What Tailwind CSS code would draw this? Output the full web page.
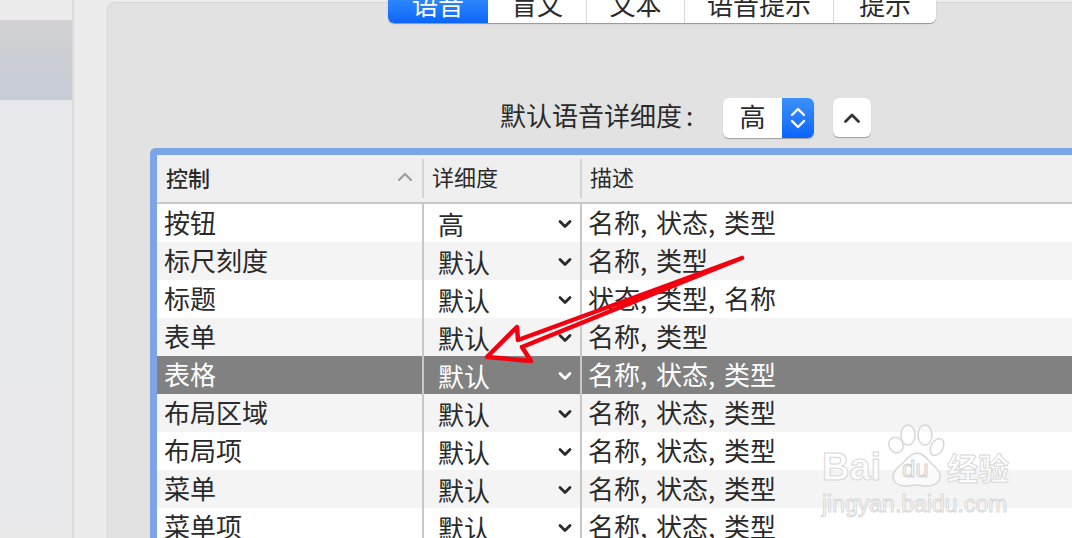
<!DOCTYPE html>
<html lang="zh-CN">

<head>
    <meta charset="UTF-8">
    <title>VoiceOver 详细度</title>
    <script src="https://cdn.jsdelivr.net/npm/@tailwindcss/browser@4"></script>
</head>

<body class="relative h-[538px] w-[1072px] overflow-hidden bg-[#ececec] font-['Noto_Sans_CJK_SC','Liberation_Sans',sans-serif] text-[#2a2a2a]">
    <div class="flex h-full">
        <!-- sidebar -->
        <aside class="h-full w-[74px] shrink-0 border-r-2 border-[#dcdcdc] bg-[#ececec] pt-5">
            <div class="h-[80px] bg-gradient-to-b from-[#d2d2d4] to-[#c6ccd6]"></div>
            <div class="h-[438px] bg-gradient-to-b from-[#e6e8ec] to-[#e9e9ea]"></div>
        </aside>

        <!-- group box -->
        <main class="ml-[33px] mt-[2px] h-[560px] flex-1 rounded-tl-lg border-l border-t border-[#d6d6d6] bg-[#e2e2e2] pl-[42px]">
            <!-- tabs -->
            <div class="-mt-[13px] ml-[238px] flex h-[33px] w-[548px] overflow-hidden rounded-b-md bg-white text-[26px] leading-[28px] shadow-[0_1px_1px_rgba(0,0,0,0.35)]">
                <div class="w-[100px] bg-gradient-to-b from-[#3c94fb] to-[#0a64fa] text-center text-white">语音</div>
                <div class="w-[99px] border-r border-[#d8d8d8] text-center">盲文</div>
                <div class="w-[98px] border-r border-[#d8d8d8] text-center">文本</div>
                <div class="w-[149px] border-r border-[#d8d8d8] text-center">语音提示</div>
                <div class="flex-1 text-center">提示</div>
            </div>

            <!-- default verbosity -->
            <div class="ml-[350px] mt-[75px] flex h-[40px] items-start">
                <span class="w-[223px] whitespace-nowrap text-[26px] leading-[34px]">默认语音详细度<span class="ml-[4px]">:</span></span>
                <div class="flex h-[40px] w-[91px] overflow-hidden rounded-md bg-white shadow-[0_1px_1px_rgba(0,0,0,0.3)]">
                    <span class="w-[59px] text-center text-[26px] leading-[36px]">高</span>
                    <div class="flex flex-1 items-center justify-center bg-gradient-to-b from-[#3c90f8] to-[#0a64fa]">
                        <svg width="16" height="26" viewBox="0 0 16 26" fill="none" stroke="white" stroke-width="2.4" stroke-linecap="round" stroke-linejoin="round"><path d="M2 10 8 4l6 6M2 16l6 6 6-6"/></svg>
                    </div>
                </div>
                <div class="ml-[19px] flex h-[39px] w-[38px] items-center justify-center rounded-md bg-white shadow-[0_1px_1px_rgba(0,0,0,0.3)]">
                    <svg width="18" height="12" viewBox="0 0 18 12" fill="none" stroke="#333" stroke-width="2.8" stroke-linecap="round" stroke-linejoin="round"><path d="M2.500 9.500 9 3l6.500 6.500"/></svg>
                </div>
            </div>

            <!-- table -->
            <div class="mt-[10px] rounded-tl-md border-l-[7px] border-t-[7px] border-[#7ca5e8] bg-white text-[26px] leading-[36px]">
                <div class="grid h-[49px] grid-cols-[267px_158px_1fr] border-b-2 border-[#c8c8c8] bg-[#efefef] text-[22px] leading-[34px]">
                    <div class="my-1 flex items-center justify-between border-r-2 border-[#d4d4d4] px-[9px] pb-[4px] font-medium">控制
                        <svg width="16" height="10" viewBox="0 0 16 10" fill="none" stroke="#a0a0a0" stroke-width="2.400" stroke-linecap="round" stroke-linejoin="round"><path d="M2 8l6-6 6 6"/></svg>
                    </div>
                    <div class="my-1 border-r-2 border-[#d4d4d4] pl-[8px]">详细度</div>
                    <div class="my-1 pl-[8px]">描述</div>
                </div>

                <div class="grid h-[38px] grid-cols-[267px_158px_1fr]">
                    <div class="border-r-2 border-[#c8c8c8] pl-[7px]">按钮</div>
                    <div class="flex items-center justify-between border-r-2 border-[#c8c8c8] pl-[14px] pr-[8px] pt-[2px]"><span>高</span><svg width="14" height="10" viewBox="0 0 14 10" fill="none" stroke="currentColor" stroke-width="2.800" stroke-linecap="round" stroke-linejoin="round"><path d="M2 2.500l5 5 5-5"/></svg></div>
                    <div class="whitespace-nowrap pl-[6px] [word-spacing:3px]">名称, 状态, 类型</div>
                </div>
                <div class="grid h-[38px] grid-cols-[267px_158px_1fr] bg-[#f4f4f4]">
                    <div class="border-r-2 border-[#c8c8c8] pl-[7px]">标尺刻度</div>
                    <div class="flex items-center justify-between border-r-2 border-[#c8c8c8] pl-[14px] pr-[8px] pt-[2px]"><span>默认</span><svg width="14" height="10" viewBox="0 0 14 10" fill="none" stroke="currentColor" stroke-width="2.800" stroke-linecap="round" stroke-linejoin="round"><path d="M2 2.500l5 5 5-5"/></svg></div>
                    <div class="whitespace-nowrap pl-[6px] [word-spacing:3px]">名称, 类型</div>
                </div>
                <div class="grid h-[38px] grid-cols-[267px_158px_1fr]">
                    <div class="border-r-2 border-[#c8c8c8] pl-[7px]">标题</div>
                    <div class="flex items-center justify-between border-r-2 border-[#c8c8c8] pl-[14px] pr-[8px] pt-[2px]"><span>默认</span><svg width="14" height="10" viewBox="0 0 14 10" fill="none" stroke="currentColor" stroke-width="2.800" stroke-linecap="round" stroke-linejoin="round"><path d="M2 2.500l5 5 5-5"/></svg></div>
                    <div class="whitespace-nowrap pl-[6px] [word-spacing:3px]">状态, 类型, 名称</div>
                </div>
                <div class="grid h-[38px] grid-cols-[267px_158px_1fr] bg-[#f4f4f4]">
                    <div class="border-r-2 border-[#c8c8c8] pl-[7px]">表单</div>
                    <div class="flex items-center justify-between border-r-2 border-[#c8c8c8] pl-[14px] pr-[8px] pt-[2px]"><span>默认</span><svg width="14" height="10" viewBox="0 0 14 10" fill="none" stroke="currentColor" stroke-width="2.800" stroke-linecap="round" stroke-linejoin="round"><path d="M2 2.500l5 5 5-5"/></svg></div>
                    <div class="whitespace-nowrap pl-[6px] [word-spacing:3px]">名称, 类型</div>
                </div>
                <div class="grid h-[38px] grid-cols-[267px_158px_1fr] bg-[#818181] text-white">
                    <div class="border-r-2 border-[#c8c8c8] pl-[7px]">表格</div>
                    <div class="flex items-center justify-between border-r-2 border-[#c8c8c8] pl-[14px] pr-[8px] pt-[2px]"><span>默认</span><svg width="14" height="10" viewBox="0 0 14 10" fill="none" stroke="currentColor" stroke-width="2.800" stroke-linecap="round" stroke-linejoin="round"><path d="M2 2.500l5 5 5-5"/></svg></div>
                    <div class="whitespace-nowrap pl-[6px] [word-spacing:3px]">名称, 状态, 类型</div>
                </div>
                <div class="grid h-[38px] grid-cols-[267px_158px_1fr] bg-[#f4f4f4]">
                    <div class="border-r-2 border-[#c8c8c8] pl-[7px]">布局区域</div>
                    <div class="flex items-center justify-between border-r-2 border-[#c8c8c8] pl-[14px] pr-[8px] pt-[2px]"><span>默认</span><svg width="14" height="10" viewBox="0 0 14 10" fill="none" stroke="currentColor" stroke-width="2.800" stroke-linecap="round" stroke-linejoin="round"><path d="M2 2.500l5 5 5-5"/></svg></div>
                    <div class="whitespace-nowrap pl-[6px] [word-spacing:3px]">名称, 状态, 类型</div>
                </div>
                <div class="grid h-[38px] grid-cols-[267px_158px_1fr]">
                    <div class="border-r-2 border-[#c8c8c8] pl-[7px]">布局项</div>
                    <div class="flex items-center justify-between border-r-2 border-[#c8c8c8] pl-[14px] pr-[8px] pt-[2px]"><span>默认</span><svg width="14" height="10" viewBox="0 0 14 10" fill="none" stroke="currentColor" stroke-width="2.800" stroke-linecap="round" stroke-linejoin="round"><path d="M2 2.500l5 5 5-5"/></svg></div>
                    <div class="whitespace-nowrap pl-[6px] [word-spacing:3px]">名称, 状态, 类型</div>
                </div>
                <div class="grid h-[38px] grid-cols-[267px_158px_1fr] bg-[#f4f4f4]">
                    <div class="border-r-2 border-[#c8c8c8] pl-[7px]">菜单</div>
                    <div class="flex items-center justify-between border-r-2 border-[#c8c8c8] pl-[14px] pr-[8px] pt-[2px]"><span>默认</span><svg width="14" height="10" viewBox="0 0 14 10" fill="none" stroke="currentColor" stroke-width="2.800" stroke-linecap="round" stroke-linejoin="round"><path d="M2 2.500l5 5 5-5"/></svg></div>
                    <div class="whitespace-nowrap pl-[6px] [word-spacing:3px]">名称, 状态, 类型</div>
                </div>
                <div class="grid h-[38px] grid-cols-[267px_158px_1fr]">
                    <div class="border-r-2 border-[#c8c8c8] pl-[7px]">菜单项</div>
                    <div class="flex items-center justify-between border-r-2 border-[#c8c8c8] pl-[14px] pr-[8px] pt-[2px]"><span>默认</span><svg width="14" height="10" viewBox="0 0 14 10" fill="none" stroke="currentColor" stroke-width="2.800" stroke-linecap="round" stroke-linejoin="round"><path d="M2 2.500l5 5 5-5"/></svg></div>
                    <div class="whitespace-nowrap pl-[6px] [word-spacing:3px]">名称, 状态, 类型</div>
                </div>
            </div>
        </main>
    </div>

    <!-- annotation arrow -->
    <svg class="pointer-events-none absolute left-0 top-0" width="1072" height="538" viewBox="0 0 1072 538" fill="none" stroke="#f2000f" stroke-linejoin="round" stroke-linecap="round">
        <path stroke-width="4.500" d="M742 258 518 340l-1-13-30 30 44 4-9-14 220-89"/>
    </svg>

    <!-- watermark -->
    <div class="pointer-events-none absolute left-[820px] top-[422px] h-[96px] w-[196px]">
        <svg class="absolute left-[67px] top-[2px]" width="58" height="64" viewBox="0 0 58 64" fill="white" fill-opacity="0.5" stroke="#d8d8d8" stroke-width="1.500">
            <ellipse cx="9" cy="21" rx="7" ry="8" transform="rotate(-25 9 21)"/>
            <ellipse cx="21" cy="11" rx="7" ry="10"/>
            <ellipse cx="38" cy="11" rx="7" ry="10"/>
            <ellipse cx="50" cy="23" rx="6" ry="9" transform="rotate(30 50 23)"/>
            <path d="M30 29c6 0 10 6 15 11 6 5 9 9 8 13-1 7-7 9-13 9-4 0-7-1-10-1-4 0-7 1-11 1-7 0-13-3-13-10 0-5 5-9 10-13 4-4 8-10 14-10z"/>
        </svg>
        <span class="absolute left-[2px] top-[22px] font-['Liberation_Sans',sans-serif] text-[38px] font-bold leading-[46px] text-white/70 [-webkit-text-stroke:1px_#d8d8d8]">Bai</span>
        <span class="absolute left-[82px] top-[34px] font-['Liberation_Sans',sans-serif] text-[24px] leading-[26px] text-white/70 [-webkit-text-stroke:1px_#d0d0d0]">du</span>
        <span class="absolute left-[127px] top-[25px] whitespace-nowrap text-[31px] font-bold leading-[40px] text-white/70 [-webkit-text-stroke:1px_#d8d8d8]">经验</span>
        <span class="absolute left-[2px] top-[69px] whitespace-nowrap font-['Liberation_Sans',sans-serif] text-[23px] leading-[26px] text-white/70 [-webkit-text-stroke:1px_#d8d8d8]">jingyan.baidu.com</span>
    </div>
</body>

</html>
